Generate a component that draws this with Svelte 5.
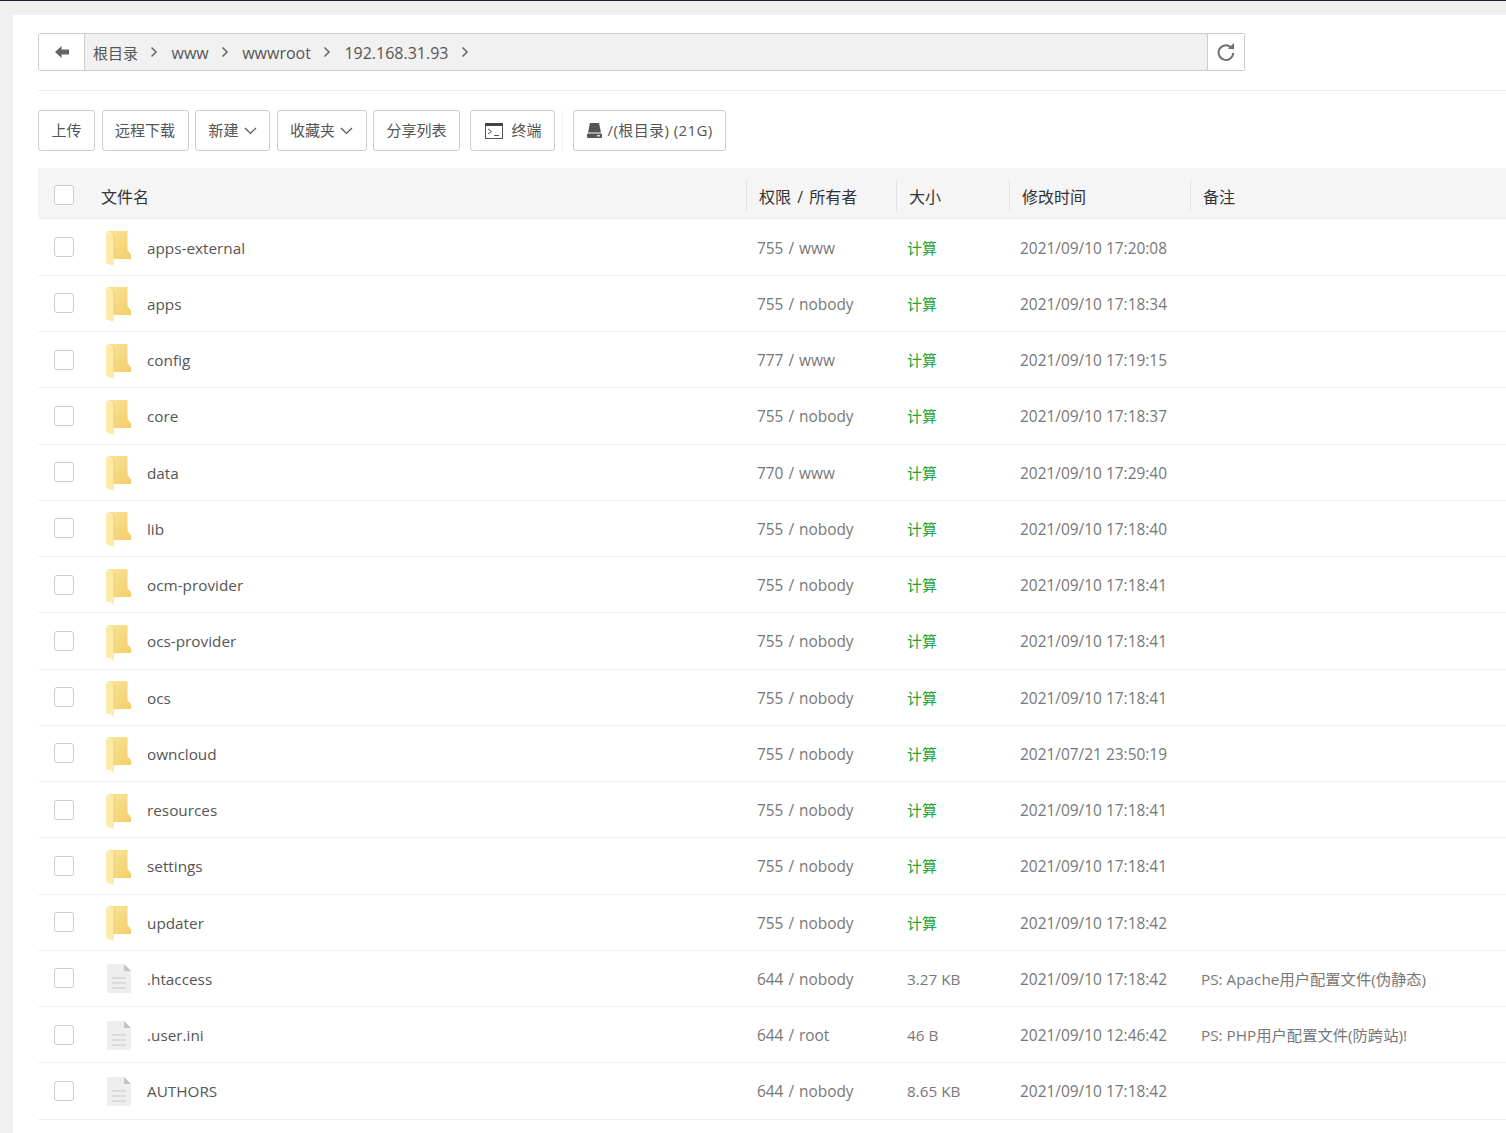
<script>
  const F = 'folder';
  const D = 'file';
  const rows = [
    { name: 'apps-external', perm: '755 / www', time: '2021/09/10 17:20:08', kind: F },
    { name: 'apps', perm: '755 / nobody', time: '2021/09/10 17:18:34', kind: F },
    { name: 'config', perm: '777 / www', time: '2021/09/10 17:19:15', kind: F },
    { name: 'core', perm: '755 / nobody', time: '2021/09/10 17:18:37', kind: F },
    { name: 'data', perm: '770 / www', time: '2021/09/10 17:29:40', kind: F },
    { name: 'lib', perm: '755 / nobody', time: '2021/09/10 17:18:40', kind: F },
    { name: 'ocm-provider', perm: '755 / nobody', time: '2021/09/10 17:18:41', kind: F },
    { name: 'ocs-provider', perm: '755 / nobody', time: '2021/09/10 17:18:41', kind: F },
    { name: 'ocs', perm: '755 / nobody', time: '2021/09/10 17:18:41', kind: F },
    { name: 'owncloud', perm: '755 / nobody', time: '2021/07/21 23:50:19', kind: F },
    { name: 'resources', perm: '755 / nobody', time: '2021/09/10 17:18:41', kind: F },
    { name: 'settings', perm: '755 / nobody', time: '2021/09/10 17:18:41', kind: F },
    { name: 'updater', perm: '755 / nobody', time: '2021/09/10 17:18:42', kind: F },
    { name: '.htaccess', perm: '644 / nobody', size: '3.27 KB', time: '2021/09/10 17:18:42', note: 'PS: Apache用户配置文件(伪静态)', kind: D },
    { name: '.user.ini', perm: '644 / root', size: '46 B', time: '2021/09/10 12:46:42', note: 'PS: PHP用户配置文件(防跨站)!', kind: D },
    { name: 'AUTHORS', perm: '644 / nobody', size: '8.65 KB', time: '2021/09/10 17:18:42', kind: D },
    { name: '', perm: '', size: '', time: '', kind: D }
  ];
  const crumbs = ['根目录', 'www', 'wwwroot', '192.168.31.93'];
</script>

<div class="topline"></div>
<main class="page">
  <div class="pathbar">
    <button class="back" aria-label="back">
      <svg width="16" height="14" viewBox="0 0 16 14"><path d="M7.500 1 1 7l6.500 6V9.500H15v-5H7.500z" fill="#666" /></svg>
    </button>
    <div class="crumbs">
      {#each crumbs as c}
        <span class="crumb">{c}</span>
        <svg class="sep" width="8" height="12" viewBox="0 0 8 12"><path d="M1.500 1.500 6 6l-4.500 4.500" fill="none" stroke="#666" stroke-width="1.500" /></svg>
      {/each}
    </div>
    <button class="refresh" aria-label="refresh">
      <svg width="18" height="20" viewBox="0 0 18 20"><path d="M13.800 5.200A7.300 7.300 0 1 0 16.200 11" fill="none" stroke="#707070" stroke-width="2" /><path d="M10.800 6.800 17 7.200V1z" fill="#707070" /></svg>
    </button>
  </div>

  <div class="toolbar">
    <button class="btn"><span>上传</span></button>
    <button class="btn"><span>远程下载</span></button>
    <button class="btn"><span>新建</span>
      <svg class="caret" width="13" height="8" viewBox="0 0 13 8"><path d="M1 1l5.500 5.500L12 1" fill="none" stroke="#555" stroke-width="1.200" /></svg>
    </button>
    <button class="btn"><span>收藏夹</span>
      <svg class="caret" width="13" height="8" viewBox="0 0 13 8"><path d="M1 1l5.500 5.500L12 1" fill="none" stroke="#555" stroke-width="1.200" /></svg>
    </button>
    <button class="btn"><span>分享列表</span></button>
    <button class="btn term">
      <svg width="18" height="16" viewBox="0 0 18 16">
        <rect x="0.500" y="0.500" width="17" height="15" fill="#fff" stroke="#555" />
        <rect x="0" y="0" width="18" height="3" fill="#444" />
        <path d="M3 6l3.500 2.500L3 11" fill="none" stroke="#555" />
        <path d="M9 12.500h5" stroke="#555" />
      </svg>
      <span>终端</span>
    </button>
    <div class="vr"></div>
    <button class="btn disk">
      <svg width="15" height="15" viewBox="0 0 15 15">
        <path d="M3 0h9l2 9.500H1z" fill="#555" />
        <path d="M1 10.500h13a1 1 0 0 1 1 1V14a1 1 0 0 1-1 1H1a1 1 0 0 1-1-1v-2.500a1 1 0 0 1 1-1z" fill="#555" />
        <rect x="10" y="12" width="3" height="1.500" fill="#ddd" />
      </svg>
      <span>/(根目录) (21G)</span>
    </button>
  </div>

  <div class="table">
    <div class="row head">
      <div class="check"><span class="box"></span></div>
      <div class="name">文件名</div>
      <div class="perm">权限 / 所有者</div>
      <div class="size">大小</div>
      <div class="time">修改时间</div>
      <div class="note">备注</div>
    </div>
    {#each rows as r}
      <div class="row">
        <div class="check">{#if r.name}<span class="box"></span>{/if}</div>
        <div class="name">
          {#if r.kind === F}
            <svg class="ico" width="28" height="36" viewBox="0 0 28 36">
              <defs>
                <linearGradient id="fg" x1="0" y1="0" x2="1" y2="1">
                  <stop offset="0" stop-color="#fbe49a" />
                  <stop offset="1" stop-color="#f3cd68" />
                </linearGradient>
              </defs>
              <path d="M2 1h20.500v19l3.500 4.500V29H8V5z" fill="url(#fg)" />
              <path d="M1 2l8 3V36l-8-3z" fill="#fceaa9" />
              <path d="M8.500 4.800h1V29h-1z" fill="#eecb70" />
            </svg>
          {:else}
            <svg class="ico" width="28" height="36" viewBox="0 0 28 36">
              <path d="M2 3h17l7 7v22H2z" fill="#eeeeee" />
              <path d="M19 3l7 7h-7z" fill="#c4c4c4" />
              <path d="M7 17h14M7 22h14M7 27h14" stroke="#d4d4d4" stroke-width="1.500" />
            </svg>
          {/if}
          <span>{r.name}</span>
        </div>
        <div class="perm">{r.perm}</div>
        <div class="size">
          {#if r.kind === F}<span class="calc">计算</span>{:else}{r.size}{/if}
        </div>
        <div class="time">{r.time}</div>
        <div class="note">{r.note ?? ''}</div>
      </div>
    {/each}
  </div>
</main>

<style>
  :global(body) {
    margin: 0;
    background: #f0f0f0;
    overflow: hidden;
    font-family: "Open Sans", "Noto Sans CJK SC", sans-serif;
  }

  .topline {
    height: 1px;
    background: #1c2430;
  }

  .page {
    margin: 14px 0 0 13px;
    background: #fff;
    padding: 18px 0 0 25px;
    height: 1118px;
    box-sizing: border-box;
    overflow: hidden;
  }

  button {
    font: inherit;
  }

  .pathbar {
    display: flex;
    width: 1207px;
    height: 38px;
    box-sizing: border-box;
    border: 1px solid #ccc;
    border-radius: 2px;
    background: #f1f1f1;
  }

  .back {
    width: 46px;
    flex: none;
    background: #fff;
    border: 0;
    border-right: 1px solid #ccc;
    display: flex;
    align-items: center;
    justify-content: center;
    padding: 0;
  }

  .crumbs {
    flex: 1;
    display: flex;
    align-items: center;
    padding: 2px 0 0 8px;
    color: #555;
    font-size: 16px;
    gap: 12.500px;
  }

  .crumb:first-child {
    font-size: 15px;
    margin-top: -2px;
  }

  .sep {
    margin: -2px 1px 0 -0.500px;
  }

  .refresh {
    width: 37px;
    flex: none;
    background: #fff;
    border: 0;
    border-left: 1px solid #ccc;
    display: flex;
    align-items: center;
    justify-content: center;
    padding: 0;
  }

  .toolbar {
    margin-top: 19px;
    padding-top: 19px;
    border-top: 1px solid #eee;
    display: flex;
    gap: 6.500px;
    margin-bottom: 17px;
  }

  .btn {
    height: 41px;
    box-sizing: border-box;
    padding: 0 12.500px;
    border: 1px solid #ccc;
    border-radius: 3px;
    background: #fff;
    color: #555;
    font-size: 15px;
    display: flex;
    align-items: center;
    gap: 5px;
    white-space: nowrap;
  }

  .btn span {
    margin-top: -2px;
  }

  .term {
    margin-left: 3.500px;
    gap: 8.500px;
  }

  .term svg {
    margin-left: 1.500px;
  }

  .disk {
    gap: 6px;
    padding-left: 13px;
    margin-left: 3.500px;
  }

  .disk span {
    letter-spacing: 0.400px;
  }

  .vr {
    width: 1px;
    height: 41px;
    background: #f0f0f0;
  }

  .table {
    font-size: 15.300px;
    color: #777;
  }

  .row {
    display: grid;
    grid-template-columns: 63px 645px 150px 113px 181px 1fr;
    height: 56.250px;
    box-sizing: border-box;
    border-bottom: 1px solid #f0f0f0;
    align-items: center;
  }

  .row > div {
    padding-left: 11px;
    white-space: nowrap;
    position: relative;
    top: 0.500px;
    line-height: 20px;
  }

  .row > .check {
    padding-left: 16px;
    top: 0;
    display: flex;
  }

  .box {
    display: block;
    width: 20px;
    height: 20px;
    box-sizing: border-box;
    border: 1px solid #ccc;
    border-radius: 3px;
    background: #fff;
  }

  .row > .name {
    padding-left: 0;
    display: flex;
    align-items: center;
    color: #555;
  }

  .row > .name .ico {
    position: relative;
    top: 0.500px;
  }

  .row > .perm {
    font-size: 15.400px;
    word-spacing: 1px;
    top: 1.500px;
  }

  .row > .time {
    font-size: 15.450px;
  }

  .ico {
    margin: 0 14px 0 4px;
    flex: none;
  }

  .calc {
    color: #20a53a;
    font-size: 15px;
  }

  .head {
    height: 51px;
    margin-bottom: 0.500px;
    background: #f5f5f5;
    border-bottom: 1px solid #eaeaea;
    color: #333;
    font-size: 16px;
  }

  .row.head > div {
    top: 4px;
    padding-left: 13px;
    font-size: 16px;
  }

  .row.head > .perm {
    word-spacing: 2px;
  }

  .row.head > .check {
    top: 2px;
    padding-left: 16px;
  }

  .row.head > .name {
    padding-left: 0;
    color: #333;
  }

  .head > .perm::before,
  .head > .size::before,
  .head > .time::before,
  .head > .note::before {
    content: '';
    position: absolute;
    left: 0;
    top: -7px;
    height: 31px;
    width: 1px;
    background: #e3e3e3;
  }
</style>
